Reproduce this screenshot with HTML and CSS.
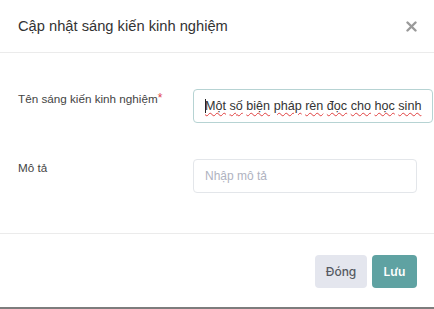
FILE: index.html
```html
<!DOCTYPE html>
<html lang="vi">
<head>
    <meta charset="UTF-8">
    <meta name="viewport" content="width=device-width, initial-scale=1.0">
    <title>Cập nhật sáng kiến kinh nghiệm</title>
    <link rel="stylesheet" href="styles.css">
</head>
<body>
    <div class="modal">
        <header class="modal-header">
            <h1 class="modal-title">Cập nhật sáng kiến kinh nghiệm</h1>
            <button class="close-btn" aria-label="Đóng">
                <svg width="11" height="11" viewBox="0 0 11 11">
                    <path d="M1.5 1.5 L9.5 9.5 M9.5 1.5 L1.5 9.5" stroke="#9a9a9a" stroke-width="2.4" stroke-linecap="round"/>
                </svg>
            </button>
        </header>

        <div class="modal-body">
            <div class="form-row">
                <label class="form-label">Tên sáng kiến kinh nghiệm<span class="required">*</span></label>
                <div class="field field-focus">
                    <span class="field-text"><span class="caret"></span><span class="typo">Một</span> <span class="typo">số</span> <span class="typo">biện</span> <span class="typo">pháp</span> <span class="typo">rèn</span> <span class="typo">đọc</span> <span class="typo">cho</span> <span class="typo">học</span> <span class="typo">sinh</span></span>
                </div>
            </div>
            <div class="form-row">
                <label class="form-label">Mô tả</label>
                <input type="text" class="field" placeholder="Nhập mô tả">
            </div>
        </div>

        <footer class="modal-footer">
            <button class="btn btn-close">Đóng</button>
            <button class="btn btn-save">Lưu</button>
        </footer>
    </div>
</body>
</html>
```

FILE: styles.css
```css
body {
    margin: 0;
    padding: 0;
    background-color: #ffffff;
    font-family: "Liberation Sans", Arial, sans-serif;
}
.modal {
    width: 434px;
    height: 309px;
    box-sizing: border-box;
    border-bottom: 2px solid #7d7d7d;
    background-color: #ffffff;
}
.modal-header {
    height: 53px;
    box-sizing: border-box;
    padding: 0 17px 0 18px;
    display: flex;
    align-items: center;
    justify-content: space-between;
    border-bottom: 1px solid #ebebeb;
}
.modal-title {
    margin: 0;
    font-size: 14.7px;
    font-weight: normal;
    color: #333333;
}
.close-btn {
    border: none;
    background: none;
    padding: 0;
    width: 11px;
    height: 11px;
    display: flex;
    cursor: pointer;
}
.modal-body {
    padding: 36px 17px 40px 18px;
    display: flex;
    flex-direction: column;
    gap: 36px;
    border-bottom: 1px solid #ebebeb;
}
.form-row {
    display: flex;
    align-items: flex-start;
}
.form-label {
    width: 175px;
    flex-shrink: 0;
    padding-top: 1px;
    font-size: 11.7px;
    line-height: 16px;
    color: #444444;
}
.required {
    color: #e0434b;
    font-size: 12px;
    vertical-align: 1px;
}
.field {
    flex: 1;
    height: 34px;
    box-sizing: border-box;
    border: 1px solid #e3e6ea;
    border-radius: 4px;
    padding: 0 11px;
    font-family: "Liberation Sans", Arial, sans-serif;
    font-size: 12px;
    color: #333333;
    outline: none;
    display: flex;
    align-items: center;
}
.field::placeholder {
    color: #b0b3bf;
}
.field-focus {
    border-color: #b6d3d3;
    color: #333333;
    font-size: 12.6px;
}
.field-text {
    white-space: nowrap;
}
.caret {
    display: inline-block;
    width: 1px;
    height: 14px;
    margin-right: -1px;
    vertical-align: -3px;
    background-color: #222222;
}
.typo {
    text-decoration: underline wavy #e04040;
    text-decoration-thickness: 1px;
    text-underline-offset: 2px;
}
.modal-footer {
    display: flex;
    justify-content: flex-end;
    gap: 5px;
    padding: 21px 17px 0 18px;
}
.btn {
    height: 33px;
    border: none;
    border-radius: 4px;
    font-family: Inter, "Noto Sans", sans-serif;
    font-size: 12px;
    font-weight: 500;
    cursor: pointer;
}
.btn-close {
    width: 52px;
    background-color: #e4e6ee;
    color: #555a62;
}
.btn-save {
    width: 45px;
    background-color: #5fa2a2;
    color: #ffffff;
    font-weight: 600;
}
```
